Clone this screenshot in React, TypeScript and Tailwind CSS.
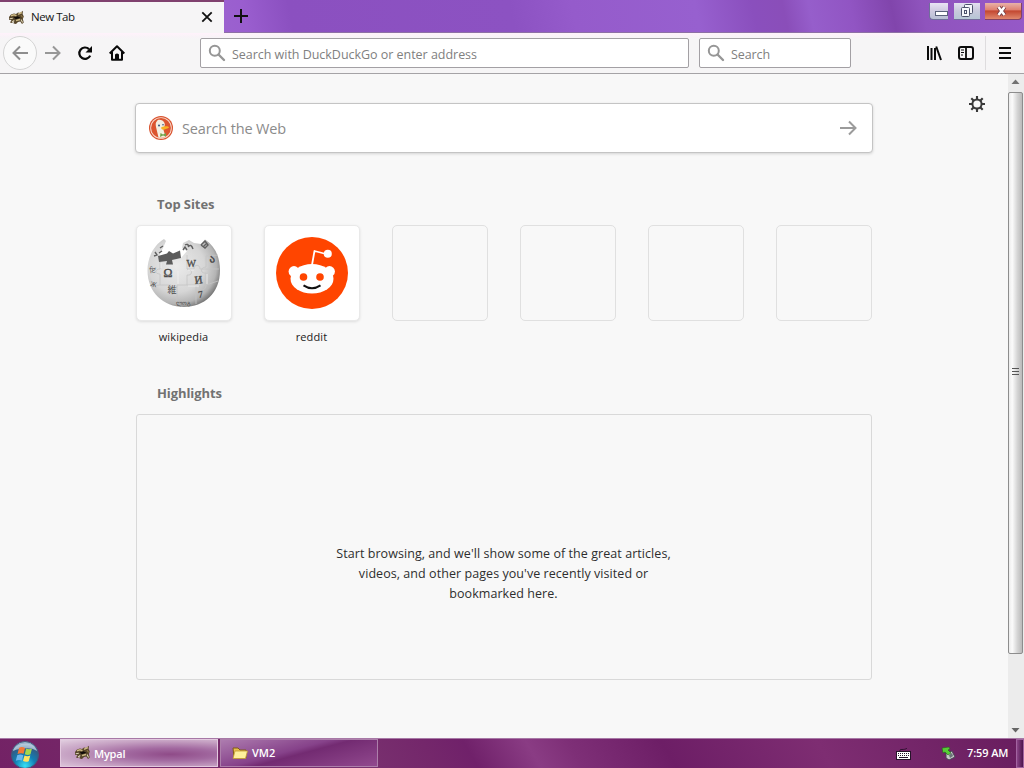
import React from "react";

const Magnifier = () => (
  <svg width="18" height="18" viewBox="0 0 18 18" fill="none" stroke="#969696" className="shrink-0">
    <circle cx="6.8" cy="6.8" r="5" strokeWidth="2" />
    <path d="M10.5 10.5 L16 16" strokeWidth="2.4" strokeLinecap="round" />
  </svg>
);

const Beast = () => (
  <svg width="17" height="16" viewBox="0 0 17 16" className="shrink-0">
    <path d="M1 7 L3 4.5 L6 3.5 L8 4 L10 2.5 L12 3 L15 .8 L14.6 4 L15.8 6.5 L14.8 9 L15.8 12.5 L14 14 L12.3 11.5 L10 12 L8 14 L5.5 13.5 L6 11.2 L4 13 L2 12.4 L3.5 10 L1.2 10Z" fill="#57462b" />
    <path d="M3 5.8 L6 4.8 L8.5 5.8M10 4.4 L13.8 2.5M8 10.4 L12 9.6" stroke="#cdb984" strokeWidth="1.5" fill="none" />
    <path d="M1.8 8.8 L4.8 8.2M13 9.5 L14.6 12.6M4 12 L6.3 10.5" stroke="#dcd3b5" strokeWidth="1.1" fill="none" />
    <path d="M5.5 7.5 L9.5 6.2 L12.5 7.8 L8 9.3Z" fill="#100c08" />
    <path d="M13 5.2 L14.6 7.4" stroke="#a3884e" />
  </svg>
);

const DuckLogo = () => (
  <svg width="24" height="24" viewBox="0 0 24 24" className="shrink-0">
    <circle cx="12" cy="12" r="12" fill="#d9532f" />
    <circle cx="12" cy="12" r="10.8" fill="#f8dcd0" />
    <circle cx="12" cy="12" r="9.9" fill="#dc552f" />
    <path d="M8 5 C9 3 14 3.5 15.5 7 C16.5 10 14.5 12 14.5 14 L16.5 20.5 C14 22 11 22 9.5 21.5 L7 11 C6.5 8 6.5 6.5 8 5Z" fill="#f3eee0" />
    <path d="M12.5 11 C16 9.8 20 10.3 20 11.4 C19 12.5 16 13 15 13.7 C13 14 11.5 12.5 12.5 11Z" fill="#f8b223" />
    <path d="M11.5 17 L14 18.5 L17 17 L17 20.5 L14 19.5 L11 21Z" fill="#72a34b" />
    <circle cx="10" cy="9.4" r="1" fill="#31557a" />
    <circle cx="14" cy="8.8" r=".8" fill="#31557a" />
  </svg>
);

const Globe = () => (
  <svg width="76" height="76" viewBox="0 0 76 76" className="shrink-0">
    <defs>
      <radialGradient id="globe" cx="40%" cy="40%" r="64%">
        <stop offset="0" stopColor="#ebebeb" />
        <stop offset=".6" stopColor="#d6d6d6" />
        <stop offset=".86" stopColor="#b4b4b4" />
        <stop offset="1" stopColor="#777" />
      </radialGradient>
    </defs>
    <path d="M18 4 L20 6 L17 13 L12 23 L24 25 L35 23 L41 16 L36 13 L37 8 L43 5 L48 8 L55 9 L59 4.5 C69 11 74 22 74 35.5 C74 58 58 72 38 72 C17 72 1.5 57 1.5 35.5 C1.5 22 8 10 18 4Z" fill="url(#globe)" />
    <path d="M12 21 L21 18.5 L23 16 L27 18.5 L34 15.5 L35 23 L26 25 L27 29.5 L20 29.5 L21 26 L13 27Z" fill="#5c5c5c" />
    <path d="M14 27 V34 C9 34 8 39 14 39 V50 H25 C25 56 31 56 31 50 H41 V40 C47 41 47 34 41 34 V20 M41 50 H53 C53 57 60 56 60 50 L72 46 M60 50 V38 C54 39 54 32 60 32 V21 L72 20 M41 34 H48 C48 29 54 29 54 34 H73 M31 51 V70 M50 51 V69 M14 50 L5 51" fill="none" stroke="#c4c4c4" strokeWidth=".8" />
    <path d="M15 28 V33 M42 35 H48 M32 36 V49 M42 51 H53 M61 39 V49" stroke="#f0f0f0" strokeWidth=".8" />
    <g fill="#4c4c4c" fontFamily="Liberation Serif, serif">
      <text x="17.5" y="42" fontSize="12" stroke="#4c4c4c" strokeWidth=".4">Ω</text>
      <text x="40.5" y="32" fontSize="10" stroke="#4c4c4c" strokeWidth=".3">W</text>
      <text x="49" y="49" fontSize="11" stroke="#4c4c4c" strokeWidth=".4" transform="rotate(-7 49 49)">И</text>
      <text x="21.5" y="58" fontSize="9" fontFamily="Noto Sans CJK JP, sans-serif">維</text>
      <text x="52.5" y="63" fontSize="10" fontWeight="700" transform="rotate(-8 52 63)">7</text>
      <text x="64" y="28" fontSize="11" fontWeight="700" transform="rotate(-12 63 28)">ა</text>
      <text x="3.5" y="38" fontSize="7.5" transform="rotate(-8 4 38)">ਇ</text>
      <text x="4" y="51" fontSize="7" transform="rotate(12 4 51)">Ж</text>
      <text x="30" y="70" fontSize="6">ლოგ</text>
    </g>
    <path d="M55 10 L59 6 L62 10 L59 13 L55 10 M57 12 L61 8 M39 10 Q42 8 43 12 M42 12 Q45 8 47 14 M37 15 L39 12 L41 15 M14 13 L17 11 M16 16 L13 18 M8 21 L11 20 L9 17" fill="none" stroke="#606060" strokeWidth="1.4" />
  </svg>
);

const Reddit = () => (
  <svg width="72" height="72" viewBox="0 0 72 72">
    <circle cx="36" cy="36" r="36" fill="#ff4500" />
    <path d="M36 28 L38.5 14 L50 17" fill="none" stroke="#fff" strokeWidth="1.8" strokeLinejoin="round" />
    <circle cx="51.8" cy="16.8" r="4" fill="#fff" />
    <circle cx="18" cy="34.5" r="5.4" fill="#fff" />
    <circle cx="53.5" cy="34.5" r="5.4" fill="#fff" />
    <ellipse cx="36" cy="41.8" rx="21.5" ry="14.7" fill="#fff" />
    <circle cx="27.5" cy="40" r="3.8" fill="#ff4500" />
    <circle cx="44" cy="40" r="3.8" fill="#ff4500" />
    <path d="M27.5 48.3 Q36 54 44.5 48.3" fill="none" stroke="#111" strokeWidth="2" />
  </svg>
);

const StartOrb = () => (
  <svg width="28" height="28" viewBox="0 0 28 28">
    <defs>
      <radialGradient id="orb" cx="50%" cy="90%" r="85%">
        <stop offset="0" stopColor="#35e1f5" />
        <stop offset=".45" stopColor="#127eb4" />
        <stop offset=".8" stopColor="#315d86" />
        <stop offset="1" stopColor="#9db7cf" />
      </radialGradient>
    </defs>
    <circle cx="14" cy="14" r="13.5" fill="url(#orb)" stroke="#425a7d" />
    <path d="M2 10 C4 1 23 -1 26 10 C20 6 9 7 2 10Z" fill="#d3e2f0" opacity=".65" />
    <path d="M8 7 C10 5.5 12 6 14 7 L12.6 12.8 C11 12 9 12 6.5 13Z" fill="#f37836" />
    <path d="M15.2 7.5 C17 8.5 19 8.5 21 7.5 L19.5 13.3 C17.5 14.3 15.5 14 13.8 13.2Z" fill="#a5d64c" />
    <path d="M6.2 14.2 C8.5 13.2 10.4 13.3 12.3 14.2 L11 19.5 C9 18.6 7 18.7 4.8 19.7Z" fill="#6bb6ed" />
    <path d="M13.5 14.6 C15.5 15.5 17.5 15.4 19.3 14.5 L17.7 20.2 C15.8 21.1 13.8 20.9 12 20Z" fill="#ffe260" />
  </svg>
);

const Folder = () => (
  <svg width="16" height="14" viewBox="0 0 16 14">
    <path d="M1 2 H6 L8 4 H14 V12 H2 Z" fill="#e8c14c" stroke="#7f5b19" />
    <path d="M3 5 H15.5 L13.5 12.5 H1Z" fill="#fff09c" stroke="#c29a34" strokeWidth=".8" />
  </svg>
);

function TitleBar() {
  return (
    <header className="flex h-[33px] justify-between border-b border-[#8d70a5] bg-[linear-gradient(78deg,#8c52bd_0%,#9b61cf_22%,#9a5ecf_24%,#8b50c0_28.5%,#8c52c2_50%,#955bcb_56%,#9760cf_68%,#8a4fbd_73.5%,#8a4eb9_76.5%,#965ecb_79%,#9155c3_83%,#8145ac_87%,#8f54bd_90%,#9659c8_100%)]">
      <div className="flex">
        <div className="-mb-px flex w-[224px] items-center border-t-2 border-[#80416f] bg-[#f6f5f6] pl-2">
          <Beast />
          <span className="-mt-px ml-[6px] w-[170px] font-['Open_Sans',sans-serif] text-[11.5px] leading-4 tracking-[-0.45px] text-[#151515]">New Tab</span>
          <svg className="-mt-px" width="12" height="12" viewBox="0 0 12 12" stroke="#111" strokeWidth="1.8"><path d="M1.3 1.3 10.7 10.7 M10.7 1.3 1.3 10.7" /></svg>
        </div>
        <div className="flex w-[34px] items-center justify-center">
          <svg width="15" height="15" viewBox="0 0 15 15" stroke="#111" strokeWidth="2"><path d="M7 0 V14 M0 7 H14" /></svg>
        </div>
      </div>
      <div className="flex h-5 pt-[3px] pr-[2px]">
        <div className="flex h-[17px] w-[19px] items-end justify-end rounded-bl-[4px] border-b border-l border-[#706f9a] bg-gradient-to-b from-[#e9e4f4] via-[#cfcae0] to-[#b8bfd3] pb-[2px]">
          <svg width="13" height="6"><rect x=".5" y=".5" width="12" height="4" fill="#fff" stroke="#5b627b" /></svg>
        </div>
        <div className="ml-[6px] flex h-[17px] w-[26px] items-center justify-center border-b border-[#746c9c] bg-gradient-to-b from-[#e4e1f0] via-[#c8c9dc] to-[#b6c6d4]">
          <svg width="14" height="14" fill="#f6f7fb" stroke="#4d536d"><rect x="4.5" y=".5" width="8" height="9" rx="1" /><rect x="1.5" y="3.5" width="8" height="9" rx="1" /><rect x="4.5" y="6.5" width="2" height="3" /></svg>
        </div>
        <div className="ml-[5px] flex h-[17px] w-[37px] items-center justify-center rounded-br-[4px] border-r border-b border-[#824262] bg-[linear-gradient(#e8b2a9_0%,#df8272_42%,#c34831_50%,#e0886d_100%)] pr-[4px]">
          <svg width="13" height="12" viewBox="0 0 13 12"><path d="M3.5 2 9.5 10 M9.5 2 3.5 10" stroke="#753d44" strokeWidth="4.2" /><path d="M3.5 2 9.5 10 M9.5 2 3.5 10" stroke="#fff" strokeWidth="2.4" /></svg>
        </div>
      </div>
    </header>
  );
}

function NavBar() {
  return (
    <nav className="flex h-[41px] items-start border-b border-[#a5a3a6] bg-[linear-gradient(#fff2fb_0,#f8f3f7_4px,#f6f5f6_6px)] font-['Open_Sans',sans-serif]">
      <div className="flex h-[40px] w-[200px] items-center pl-[3px]">
        <div className="flex size-[34px] items-center justify-center rounded-full border border-[#d4d4d4] bg-[#fafafa]">
          <svg width="16" height="16" viewBox="0 0 16 16" fill="none" stroke="#8e8e8e" strokeWidth="2"><path d="M16 8H1.5M8 1.5 1.5 8 8 14.5" /></svg>
        </div>
        <svg className="ml-2" width="16" height="16" viewBox="0 0 16 16" fill="none" stroke="#979797" strokeWidth="2"><path d="M0 8H14.5M8 1.5 14.5 8 8 14.5" /></svg>
        <svg className="ml-4" width="16" height="16" viewBox="0 0 16 16" fill="none" stroke="#090909" strokeWidth="2.2"><path d="M13.2 10.6A5.7 5.7 0 1 1 12 4.1" /><path d="M15 1V7.5H8.5Z" fill="#090909" stroke="none" /></svg>
        <svg className="ml-4" width="16" height="16" viewBox="0 0 16 16" fill="none" stroke="#090909" strokeWidth="2"><path d="M.7 8.5 8 1.3 15.3 8.5M3 7V14.8H13V7" strokeLinejoin="round" /><path d="M6 15V9.5Q8 7.5 10 9.5V15Z" fill="#090909" stroke="none" /></svg>
      </div>
      <div className="mt-[5px] flex h-[30px] w-[489px] items-center rounded-[2px] border border-[#a3a0a4] bg-white pl-[7px]">
        <Magnifier /><span className="mt-[5px] ml-[6px] text-[12.5px] tracking-[-0.03px] text-[#808080]">Search with DuckDuckGo or enter address</span>
      </div>
      <div className="mt-[5px] ml-[10px] flex h-[30px] w-[152px] items-center rounded-[2px] border border-[#a3a0a4] bg-white pl-[7px]">
        <Magnifier /><span className="mt-[5px] ml-[6px] text-[12.5px] tracking-[-0.1px] text-[#808080]">Search</span>
      </div>
      <div className="ml-[75px] flex h-[40px] flex-1 items-center">
        <svg width="16" height="16" viewBox="0 0 16 16" stroke="#0b0b0b" strokeWidth="2"><path d="M2 1V15M5.5 3V15M9 3V15M10.2 1.5 15 15" /></svg>
        <svg className="ml-4" width="16" height="16" viewBox="0 0 16 16" fill="none" stroke="#0b0b0b"><rect x="1" y="2" width="14" height="12" rx="2" strokeWidth="2" /><path d="M8 2V14" strokeWidth="1.8" /><path d="M3 5H6M3 7.5H6M3 10H5" /></svg>
        <div className="ml-[11px] h-[34px] w-px bg-[#dedcde]" />
        <svg className="ml-[13px]" width="13" height="14" viewBox="0 0 13 14" stroke="#0b0b0b" strokeWidth="2"><path d="M0 2H12M0 7H12M0 12H12" /></svg>
      </div>
    </nav>
  );
}

function Tile({ label, children }: { label?: string; children?: React.ReactNode }) {
  return (
    <div className="w-24">
      <div className={children ? "flex size-24 items-center justify-center rounded-[5px] border border-[#e9e9e9] bg-white shadow-[0_1px_3px_#0000001c]" : "size-24 rounded-[5px] border border-[#e0e0e0]"}>{children}</div>
      <div className="mt-[8px] h-4 pr-[1px] text-center text-[11px] leading-4 tracking-[0.15px] text-[#222]">{label}</div>
    </div>
  );
}

function Content() {
  return (
    <main className="flex h-[664px] bg-[#f8f8f8] font-['Open_Sans',sans-serif]">
      <div className="w-[873px] shrink-0 pt-[29px] pl-[135px]">
        <div className="flex h-[50px] w-[738px] items-center rounded-[4px] border border-[#c4c4c4] bg-white pr-[15px] pl-[13px] shadow-[0_1px_3px_#00000026]">
          <DuckLogo />
          <span className="mt-[2px] ml-[9px] flex-1 text-[14.5px] tracking-[-0.14px] text-[#8b8b8b]">Search the Web</span>
          <svg width="17" height="16" viewBox="0 0 17 16" fill="none" stroke="#9b9b9b" strokeWidth="2"><path d="M0 8H15.5M9 1.5 15.5 8 9 14.5" /></svg>
        </div>
        <h2 className="mt-[41px] ml-[22px] h-5 text-[13px] leading-5 font-bold tracking-[-0.08px] text-[#727272]">Top Sites</h2>
        <div className="mt-[11px] ml-px flex gap-8">
          <Tile label="wikipedia"><Globe /></Tile>
          <Tile label="reddit"><Reddit /></Tile>
          <Tile /><Tile /><Tile /><Tile />
        </div>
        <h2 className="mt-[38px] ml-[22px] h-5 text-[13px] leading-5 font-bold tracking-[-0.08px] text-[#727272]">Highlights</h2>
        <div className="mt-[11px] ml-px flex h-[266px] w-[736px] justify-center rounded-[3px] border border-[#d9d9d9] pt-[129px] text-center text-[12.5px] leading-5 tracking-[0.06px] text-[#2e2e2e]">
          <p className="pr-px whitespace-nowrap">Start browsing, and we'll show some of the great articles,<br />videos, and other pages you've recently visited or<br />bookmarked here.</p>
        </div>
      </div>
      <div className="w-[135px] pt-[21px] pl-[95px]">
        <svg width="18" height="18" viewBox="0 0 18 18" stroke="#393939" fill="none"><circle cx="9" cy="9" r="4.6" strokeWidth="2" /><path d="M9 1V4M9 14V17M1 9H4M14 9H17M3.3 3.3 5.5 5.5M12.5 12.5 14.7 14.7M3.3 14.7 5.5 12.5M12.5 5.5 14.7 3.3" strokeWidth="2.1" /></svg>
      </div>
      <div className="flex w-[16px] flex-col items-start bg-[#ececec]">
        <svg className="ml-[3px]" width="9" height="18" viewBox="0 0 9 18"><path d="M.5 10 4.5 5.5 8.5 10Z" fill="#727272" /></svg>
        <div className="flex h-[562px] w-[15px] items-center justify-center rounded-[2px] border border-[#8d8d8d] bg-[linear-gradient(90deg,#ececec,#fbfbfb_25%,#d4d4d4_65%,#bababa)] pr-px pb-[3px]">
          <svg width="7" height="9" stroke="#565656"><path d="M0 1.5H7M0 4.5H7M0 7.5H7" /></svg>
        </div>
        <svg className="mt-auto mb-[4px] ml-[3px]" width="9" height="8" viewBox="0 0 9 8"><path d="M.5 2 4.5 6.5 8.5 2Z" fill="#656565" /></svg>
      </div>
    </main>
  );
}

function Taskbar() {
  return (
    <footer className="flex h-[30px] border-t border-[#a778a6] bg-[linear-gradient(60deg,#732265_0%,#79316f_35%,#74276b_42%,#70216a_46%,#8a3c84_52%,#7e2f77_56%,#6d1e66_65%,#7e2d72_80%,#681d5e_100%)] font-['Open_Sans',sans-serif] text-[11px] font-semibold text-white">
      <div className="w-[60px] pt-[2px] pl-[11px]"><StartOrb /></div>
      <div className="flex h-7 w-[158px] items-center border border-[#e3c9df] bg-[radial-gradient(ellipse_at_70%_55%,#8f4b88_0%,#a269a0_30%,#c5a0c2_65%,#e2cfe0_100%)] pl-[13px]">
        <Beast /><span className="mt-[2px] ml-[3px] tracking-[-0.2px]">Mypal</span>
      </div>
      <div className="ml-[2px] flex h-7 w-[158px] items-center border border-[#ad7fab] bg-[linear-gradient(165deg,#ad7caf_0%,#86428a_43%,#732b72_52%,#91498e_100%)] pl-[11px]">
        <Folder /><span className="ml-[4px]">VM2</span>
      </div>
      <div className="ml-auto flex items-center">
        <svg width="15" height="12" viewBox="0 0 15 12"><path d="M4 3C3 0 8 3 11 0" fill="none" stroke="#311332" /><rect x=".5" y="3.5" width="14" height="8" fill="#fff" stroke="#26132a" /><path d="M2 5.5H13M2 7.5H13" stroke="#24152b" strokeDasharray="1 1" /><path d="M3 9.5H12" stroke="#24152b" /></svg>
        <svg className="ml-[30px]" width="15" height="15" viewBox="0 0 15 15"><path d="M5 7 11 5 14 11 8 14 5 12Z" fill="#c9c9c9" stroke="#494454" /><path d="M8 9 11 7 12 10 9 12Z" fill="#6b7278" /><path d="M1 2 8 1 9 3 7 4 10 7 7 9 4 6 2 7Z" fill="#56cd35" stroke="#25601e" strokeWidth=".6" /></svg>
        <time className="ml-[11px] w-[42px] tracking-[-0.12px] whitespace-nowrap">7:59 AM</time>
        <div className="ml-[7px] h-[29px] w-[8px] border border-[#a264a0] bg-gradient-to-r from-[#8b4488] to-[#4d164d]" />
      </div>
    </footer>
  );
}

export default function App() {
  return <div className="h-[768px] w-[1024px] overflow-hidden"><TitleBar /><NavBar /><Content /><Taskbar /></div>;
}
